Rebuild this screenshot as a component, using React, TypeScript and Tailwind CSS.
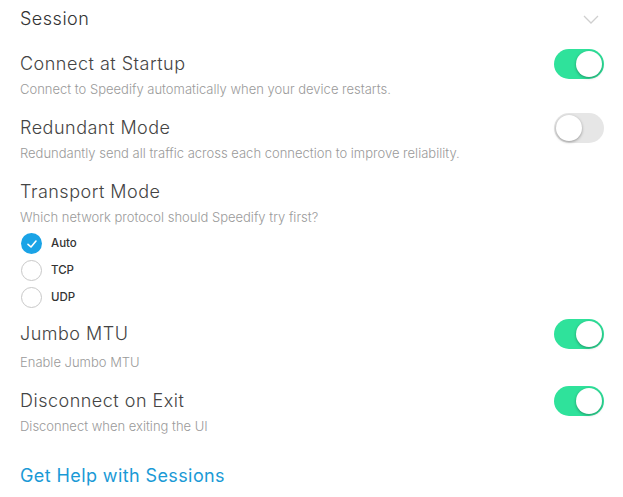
import React from "react";

function Toggle({ on }: { on: boolean }) {
  return (
    <div
      className={`relative h-[30px] w-[50px] shrink-0 rounded-full ${on ? "bg-[#2fe29b]" : "bg-[#e6e6e6]"}`}
    >
      <div
        className={`absolute top-[2px] h-[26px] w-[26px] rounded-full bg-white shadow-[0_1px_3px_rgba(0,0,0,0.35)] ${on ? "right-[2px]" : "left-[2px]"}`}
      />
    </div>
  );
}

function Radio({ checked, label }: { checked: boolean; label: string }) {
  return (
    <div className="flex h-[27px] items-center gap-[9px]">
      {checked ? (
        <div className="flex h-[21px] w-[21px] items-center justify-center rounded-full bg-[#1aa3e6]">
          <svg width="12" height="12" viewBox="0 0 12 12" fill="none">
            <path d="M2 6.3 L5 9 L10 3" stroke="white" strokeWidth="1.6" strokeLinecap="round" strokeLinejoin="round" />
          </svg>
        </div>
      ) : (
        <div className="h-[21px] w-[21px] rounded-full border border-[#c8c8c8] bg-white" />
      )}
      <span className="text-[11.5px] font-medium text-[#333]">{label}</span>
    </div>
  );
}

function Row({ title, desc, on, titleMb }: { title: string; desc: string; on: boolean; titleMb?: string }) {
  return (
    <div className="flex items-start justify-between">
      <div>
        <div className={`text-[18px] font-light leading-[24px] tracking-[0.5px] text-[#444] ${titleMb ?? "mb-[5px]"}`}>{title}</div>
        <div className="text-[13px] font-light leading-[16px] text-[#9a9a9a]">{desc}</div>
      </div>
      <div className="mt-[-3px]">
        <Toggle on={on} />
      </div>
    </div>
  );
}

export default function App() {
  return (
    <div className="h-[497px] w-[623px] bg-white pl-[20px] pr-[19px] pt-[7px] font-['Inter',sans-serif]">
      <div className="flex items-center justify-between pr-[5px]">
        <div className="text-[18px] font-light leading-[24px] tracking-[0.5px] text-[#333]">Session</div>
        <svg width="16" height="9" viewBox="0 0 16 9" fill="none">
          <path d="M1 1 L8 8 L15 1" stroke="#cfcfcf" strokeWidth="1.3" />
        </svg>
      </div>

      <div className="mt-[21px]">
        <Row title="Connect at Startup" desc="Connect to Speedify automatically when your device restarts." on />
      </div>
      <div className="mt-[19px]">
        <Row title="Redundant Mode" desc="Redundantly send all traffic across each connection to improve reliability." on={false} />
      </div>

      <div className="mt-[19px]">
        <div className="mb-[5px] text-[18px] font-light leading-[24px] tracking-[0.5px] text-[#444]">Transport Mode</div>
        <div className="text-[13px] font-light leading-[16px] text-[#9a9a9a]">Which network protocol should Speedify try first?</div>
        <div className="mt-[5px] pl-[1px]">
          <Radio checked label="Auto" />
          <Radio checked={false} label="TCP" />
          <Radio checked={false} label="UDP" />
        </div>
      </div>

      <div className="mt-[11px]">
        <Row title="Jumbo MTU" desc="Enable Jumbo MTU" on titleMb="mb-[8px]" />
      </div>
      <div className="mt-[19px]">
        <Row title="Disconnect on Exit" desc="Disconnect when exiting the UI" on />
      </div>

      <div className="mt-[30px] text-[18px] leading-[24px] tracking-[0.4px] text-[#1a9ad6]">Get Help with Sessions</div>
    </div>
  );
}
